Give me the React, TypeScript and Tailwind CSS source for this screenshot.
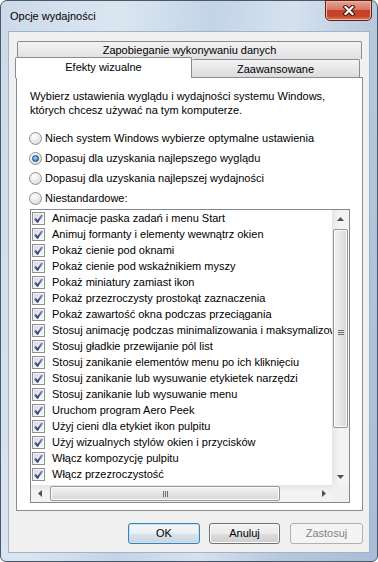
const effects = [
  'Animacje paska zadań i menu Start',
  'Animuj formanty i elementy wewnątrz okien',
  'Pokaż cienie pod oknami',
  'Pokaż cienie pod wskaźnikiem myszy',
  'Pokaż miniatury zamiast ikon',
  'Pokaż przezroczysty prostokąt zaznaczenia',
  'Pokaż zawartość okna podczas przeciągania',
  'Stosuj animację podczas minimalizowania i maksymalizowania okien',
  'Stosuj gładkie przewijanie pól list',
  'Stosuj zanikanie elementów menu po ich kliknięciu',
  'Stosuj zanikanie lub wysuwanie etykietek narzędzi',
  'Stosuj zanikanie lub wysuwanie menu',
  'Uruchom program Aero Peek',
  'Użyj cieni dla etykiet ikon pulpitu',
  'Użyj wizualnych stylów okien i przycisków',
  'Włącz kompozycję pulpitu',
  'Włącz przezroczystość',
];

const modes = [
  { label: 'Niech system Windows wybierze optymalne ustawienia', checked: false },
  { label: 'Dopasuj dla uzyskania najlepszego wyglądu', checked: true },
  { label: 'Dopasuj dla uzyskania najlepszej wydajności', checked: false },
  { label: 'Niestandardowe:', checked: false },
];

function CheckBox() {
  return (
    <span className="flex h-[13px] w-[13px] shrink-0 items-center justify-center border border-[#8e8f8f] bg-[linear-gradient(135deg,#d6d6d6,#fbfbfb)] shadow-[inset_0_0_0_1px_#f6f6f6]">
      <svg width="11" height="11" viewBox="0 0 11 11">
        <defs>
          <linearGradient id="chk" x1="0" y1="0" x2="0" y2="1">
            <stop offset="0" stopColor="#7487c8" />
            <stop offset="1" stopColor="#2f4488" />
          </linearGradient>
        </defs>
        <path d="M2 5.5 L4.5 8.5 L9.2 2" fill="none" stroke="url(#chk)" strokeWidth="2" />
      </svg>
    </span>
  );
}

function Radio({ checked }: { checked: boolean }) {
  return (
    <span className="flex h-[13px] w-[13px] shrink-0 items-center justify-center rounded-full border border-[#8e8f8f] bg-[radial-gradient(circle_at_35%_30%,#ffffff,#d4d4d4)]">
      {checked && (
        <span className="h-[7px] w-[7px] rounded-full border border-[#1b3f78] bg-[radial-gradient(circle_at_40%_35%,#9fd4f8,#2a6db8)]" />
      )}
    </span>
  );
}

function Arrow({ dir }: { dir: 'up' | 'down' | 'left' | 'right' }) {
  const d = {
    up: 'M0 4 L3.5 0 L7 4Z',
    down: 'M0 0 L3.5 4 L7 0Z',
    left: 'M4 0 L0 3.5 L4 7Z',
    right: 'M0 0 L4 3.5 L0 7Z',
  }[dir];
  const vertical = dir === 'up' || dir === 'down';
  return (
    <svg width={vertical ? 7 : 4} height={vertical ? 4 : 7} viewBox={vertical ? '0 0 7 4' : '0 0 4 7'}>
      <path d={d} fill="#505050" />
    </svg>
  );
}

function Button({ label, kind }: { label: string; kind: 'default' | 'normal' | 'disabled' }) {
  const styles = {
    default:
      'border-[#3c7fb1] bg-[linear-gradient(180deg,#f4f8fb_0%,#e9eff4_50%,#d9e2ea_51%,#cbd5df_100%)] shadow-[inset_0_0_0_1px_#bfe3fa] text-black',
    normal:
      'border-[#707070] bg-[linear-gradient(180deg,#f2f2f2_0%,#ebebeb_50%,#dddddd_51%,#cfcfcf_100%)] shadow-[inset_0_0_0_1px_#fcfcfc] text-black',
    disabled: 'border-[#adb2b5] bg-[#f4f4f4] text-[#838383]',
  }[kind];
  return (
    <div className={`flex h-[21px] items-center justify-center rounded-[3px] border ${styles} ${label === 'OK' ? 'w-[72px]' : label === 'Anuluj' ? 'w-[71px]' : 'w-[73px]'}`}>
      {label}
    </div>
  );
}

export default function App() {
  return (
    <div className="h-[562px] w-[378px] font-['Liberation_Sans',Arial,sans-serif] text-[11px] text-black">
      <div className="flex h-full flex-col rounded-t-[7px] rounded-b-[6px] border border-[#4a5868] bg-[linear-gradient(100deg,#cbd9e9_0%,#dce6f1_25%,#c3d4e7_45%,#d6e1ee_62%,#b6c8dd_80%,#a8bdd6_100%)] px-[7px] pb-[8px]">
        {/* title bar */}
        <div className="flex h-[30px] shrink-0 items-start justify-between">
          <span className="pl-[2px] pt-[8px] text-[11px] leading-[14px]">Opcje wydajności</span>
          <div className="-mr-[2px] -mt-[1px] flex h-[21px] w-[47px] items-center justify-center rounded-b-[5px] border border-[#5a2318] bg-[linear-gradient(180deg,#e8a493_0%,#d47865_45%,#c2412a_50%,#c8452c_80%,#e07a4f_100%)] shadow-[inset_0_0_0_1px_#f0b5a5]">
            <svg width="14" height="11" viewBox="0 0 14 11">
              <path d="M3.5 2 L10.5 9 M10.5 2 L3.5 9" stroke="#3b1209" strokeWidth="4.2" strokeLinecap="square" />
              <path d="M3.5 2 L10.5 9 M10.5 2 L3.5 9" stroke="#ffffff" strokeWidth="2.2" strokeLinecap="square" />
            </svg>
          </div>
        </div>

        {/* client area */}
        <div className="flex flex-1 flex-col border border-[#9fb3cb] bg-[#f0f0f0] pt-[9px]">
          <div className="ml-[8px] flex h-[18px] w-[345px] items-center justify-center rounded-t-[2px] border border-b-0 border-[#898c95] bg-[linear-gradient(180deg,#f3f3f3,#e0e0e0)]">
            Zapobieganie wykonywaniu danych
          </div>
          <div className="-mt-[2px] flex h-[20px] items-end">
            <div className="relative z-10 -mb-[1px] ml-[6px] flex h-[21px] w-[177px] items-center justify-center rounded-t-[2px] border border-b-0 border-[#898c95] bg-white pb-[2px]">
              Efekty wizualne
            </div>
            <div className="flex h-[18px] w-[168px] items-center justify-center rounded-t-[2px] border border-b-0 border-l-0 border-[#898c95] bg-[linear-gradient(180deg,#f3f3f3,#dcdcdc)] pt-[2px]">
              Zaawansowane
            </div>
          </div>

          {/* tab panel */}
          <div className="ml-[7px] flex h-[434px] w-[347px] flex-col border border-[#898c95] bg-white pl-[13px] pt-[11px]">
            <p className="leading-[14px]">
              Wybierz ustawienia wyglądu i wydajności systemu Windows,
              <br />
              których chcesz używać na tym komputerze.
            </p>
            <div className="mt-[11px] flex flex-col">
              {modes.map((m) => (
                <div key={m.label} className="flex h-[20px] items-center gap-[3px] pl-[-1px]">
                  <span className="-ml-[1px]">
                    <Radio checked={m.checked} />
                  </span>
                  <span>{m.label}</span>
                </div>
              ))}
            </div>

            {/* list box */}
            <div className="mt-[1px] flex h-[294px] w-[320px] flex-col border border-[#828790]">
              <div className="flex h-[275px]">
                <div className="flex w-[301px] flex-col overflow-hidden">
                  {effects.map((e) => (
                    <div key={e} className="flex h-[16px] shrink-0 items-center gap-[7px] whitespace-nowrap pl-[1px]">
                      <CheckBox />
                      <span>{e}</span>
                    </div>
                  ))}
                </div>
                {/* vertical scrollbar */}
                <div className="flex w-[17px] flex-col bg-[linear-gradient(90deg,#e5e5e5,#f3f3f3_40%,#f3f3f3)]">
                  <div className="flex h-[17px] items-center justify-center">
                    <Arrow dir="up" />
                  </div>
                  <div className="mx-[1px] mt-[2px] flex h-[199px] items-center justify-center rounded-[2px] border border-[#979797] bg-[linear-gradient(90deg,#f2f2f2,#e5e5e5_50%,#d6d6d6)] shadow-[inset_0_0_0_1px_#fbfbfb]">
                    <div className="mt-[8px] flex flex-col gap-[1px]">
                      <span className="h-[1px] w-[6px] bg-[#6e6e6e]" />
                      <span className="h-[1px] w-[6px] bg-[#6e6e6e]" />
                      <span className="h-[1px] w-[6px] bg-[#6e6e6e]" />
                    </div>
                  </div>
                  <div className="flex-1" />
                  <div className="flex h-[17px] items-center justify-center">
                    <Arrow dir="down" />
                  </div>
                </div>
              </div>
              {/* horizontal scrollbar */}
              <div className="flex h-[17px]">
                <div className="flex w-[301px] items-center bg-[linear-gradient(180deg,#e5e5e5,#f3f3f3_40%,#f3f3f3)]">
                  <div className="flex w-[17px] items-center justify-center">
                    <Arrow dir="left" />
                  </div>
                  <div className="ml-[2px] flex h-[15px] w-[230px] items-center justify-center rounded-[2px] border border-[#979797] bg-[linear-gradient(180deg,#f2f2f2,#e5e5e5_50%,#d6d6d6)] shadow-[inset_0_0_0_1px_#fbfbfb]">
                    <div className="flex gap-[1px]">
                      <span className="h-[6px] w-[1px] bg-[#6e6e6e]" />
                      <span className="h-[6px] w-[1px] bg-[#6e6e6e]" />
                      <span className="h-[6px] w-[1px] bg-[#6e6e6e]" />
                    </div>
                  </div>
                  <div className="flex-1" />
                  <div className="flex w-[17px] items-center justify-center">
                    <Arrow dir="right" />
                  </div>
                </div>
                <div className="w-[17px] bg-[#f0f0f0]" />
              </div>
            </div>
          </div>

          {/* dialog buttons */}
          <div className="mt-[12px] flex justify-end gap-[9px] pr-[6px]">
            <Button label="OK" kind="default" />
            <div className="mr-[1px]">
              <Button label="Anuluj" kind="normal" />
            </div>
            <Button label="Zastosuj" kind="disabled" />
          </div>
        </div>
      </div>
    </div>
  );
}
